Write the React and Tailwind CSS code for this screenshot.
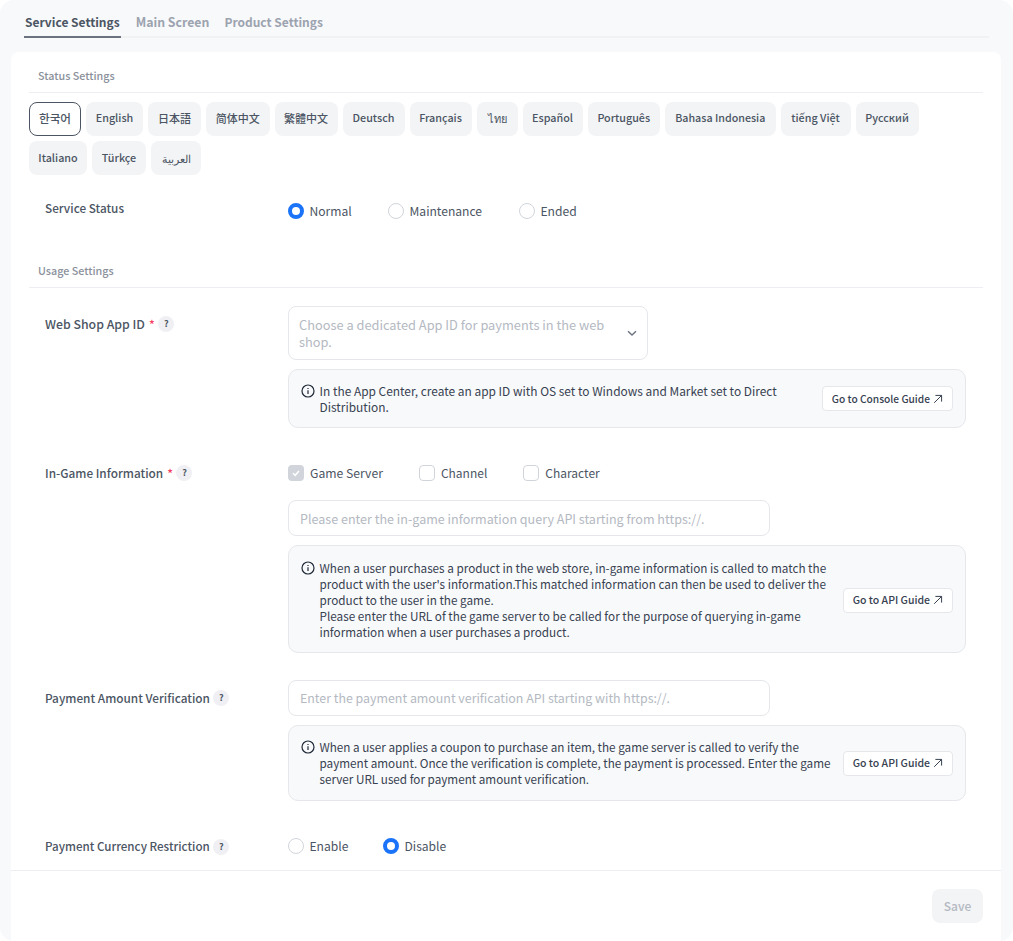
import React from "react";

const langs1 = [
  ["English", "text-[10.75px] w-[57px] pb-[1px]"], ["日本語", "text-[11px] w-[53px] pb-[1px]"], ["简体中文", "text-[11px] w-[63.5px] pb-[1px]"], ["繁體中文", "text-[11px] w-[63px] pb-[1px]"],
  ["Deutsch", "text-[10.75px] w-[62px] pb-[1px]"], ["Français", "text-[10.75px] w-[62px] pb-[1px]"], ["ไทย", "text-[11px] w-[41px] pb-[1px]"], ["Español", "text-[10.75px] w-[60px] pb-[1px]"],
  ["Português", "text-[10.75px] w-[72.5px] pb-[1px]"], ["Bahasa Indonesia", "text-[10.7px] w-[110.5px] pb-[1px]"], ["tiếng Việt", "text-[10.75px] w-[70px] pb-[1px]"], ["Русский", "text-[10.75px] w-[63px] pb-[1px]"],
];
const langs2 = [["Italiano", "text-[10.75px] w-[58px]"], ["Türkçe", "text-[10.75px] w-[54px]"], ["العربية", "text-[11px] w-[50px]"]];

function Lang({ children, active, size }) {
  return (
    <button className={"h-[34px] rounded-lg font-medium whitespace-nowrap text-[#4b5563] " + size + " " + (active ? "bg-white border border-[#4b5563]" : "bg-[#f3f4f6]")}>
      {children}
    </button>
  );
}

function Help() {
  return <span className="inline-flex items-center justify-center w-4 h-4 rounded-full bg-[#f0f0f4] text-[9px] font-bold text-[#4b5563] ml-[3.5px] shrink-0">?</span>;
}

function Label({ children, req, help, className = "" }) {
  return (
    <div className={"w-[243px] shrink-0 flex items-center h-5 font-medium text-[#4b5563] whitespace-nowrap " + className}>
      <span>{children}</span>
      {req && <span className="text-[#f43f5e] text-[12px] ml-[4px]">*</span>}
      {help && <Help />}
    </div>
  );
}

function Radio({ on, children, className = "" }) {
  return (
    <label className={"flex items-center gap-[5.5px] text-[12.1px] text-[#4b5563] " + className}>
      <span className={"w-4 h-4 rounded-full bg-white " + (on ? "border-[4px] border-[#1a73f8]" : "border border-[#d1d5db]")} />
      {children}
    </label>
  );
}

function Check({ on, children, size }) {
  return (
    <label className={"flex items-center gap-[6px] text-[#4b5563] " + size}>
      <span className={"w-4 h-4 rounded-[4px] flex items-center justify-center " + (on ? "bg-[#d1d5db]" : "bg-white border border-[#d1d5db]")}>
        {on && (
          <svg width="10" height="10" viewBox="0 0 10 10" fill="none" stroke="#fff" strokeWidth="1.5"><path d="M2 5.2 4.2 7.3 8 2.9" /></svg>
        )}
      </span>
      {children}
    </label>
  );
}

function Info({ children, btn, btnSize, textW, className = "" }) {
  return (
    <div className={"w-[678px] rounded-[10px] border border-[#e5e7eb] bg-[#f8f9fa] flex items-center pl-3 pr-3 " + className}>
      <div className="flex items-start">
        <svg className="shrink-0 mt-[1px]" width="14" height="14" viewBox="0 0 14 14" fill="none" stroke="#1f2937" strokeWidth="1.2">
          <circle cx="7" cy="7" r="6" />
          <path d="M7 6.2v3.8M7 3.9v1.2" />
        </svg>
        <div className={"ml-[4.5px] leading-4 text-[#374151] " + textW}>{children}</div>
      </div>
      <button className={"ml-auto h-[25px] px-[9px] rounded-[4px] bg-white border border-[#e5e7eb] font-medium text-[#374151] flex items-center gap-[3px] whitespace-nowrap " + btnSize}>
        {btn}
        <svg width="10" height="10" viewBox="0 0 10 10" fill="none" stroke="#374151" strokeWidth="1"><path d="M1.2 8.8 8.6 1.4M2.4 1.4h6.2v6.2" /></svg>
      </button>
    </div>
  );
}

function TextInput({ placeholder, size }) {
  return (
    <input
      placeholder={placeholder}
      className={"block w-[482px] h-9 rounded-lg border border-[#e5e7eb] bg-white px-[11px] placeholder:text-[#b4b9c2] outline-none " + size}
    />
  );
}

export default function App() {
  return (
    <div className="w-[1013px] h-[941px] overflow-hidden bg-white text-[#4b5563]" style={{ fontFamily: '"Noto Sans CJK KR","Noto Sans",sans-serif' }}>
      <div className="h-full rounded-[14px] bg-[#f8f9fb] flex flex-col">
        <div className="mx-[24px] h-[38px] border-b-2 border-[#f1f2f4] flex gap-[15px] shrink-0">
          <div className="h-[38px] px-[1px] pt-[12px] border-b-2 border-[#6b7280] text-[12px] leading-[20px] font-bold text-[#4b5563]">Service Settings</div>
          <div className="pt-[12px] text-[12.3px] leading-[20px] font-bold text-[#9ca3af]">Main Screen</div>
          <div className="pt-[12px] text-[12px] leading-[20px] font-bold text-[#9ca3af]">Product Settings</div>
        </div>

        <div className="ml-[11px] mr-[12px] mt-[14px] flex-1 min-h-0 bg-white rounded-t-[8px] flex flex-col">
          <div className="flex-1 min-h-0 overflow-hidden px-[18px]">
            <div className="h-[41px] border-b border-[#eceef1] pl-[9px] pt-[16px] text-[10.75px] leading-4 font-medium text-[#8b919b]">Status Settings</div>
            <div className="mt-[9px] flex flex-col gap-[5px]">
              <div className="flex gap-[5px]">
                <Lang active size="text-[11.6px] w-[52px] pb-[1px]">한국어</Lang>
                {langs1.map(([l, s]) => <Lang key={l} size={s}>{l}</Lang>)}
              </div>
              <div className="flex gap-[5px]">
                {langs2.map(([l, s]) => <Lang key={l} size={s}>{l}</Lang>)}
              </div>
            </div>

            <div className="mt-[24px] pl-4 flex">
              <Label className="-mt-[1px] text-[11.75px]">Service Status</Label>
              <div className="flex pt-[4px] h-5">
                <Radio on className="w-[100px]">Normal</Radio>
                <Radio className="w-[131px]">Maintenance</Radio>
                <Radio>Ended</Radio>
              </div>
            </div>

            <div className="mt-[28px] h-[41px] border-b border-[#eceef1] pl-[9px] pt-[16px] text-[10.75px] leading-4 font-medium text-[#8b919b]">Usage Settings</div>

            <div className="mt-[18px] pl-4 flex">
              <Label className="mt-[8px] text-[12.3px]" req help>Web Shop App ID</Label>
              <div>
                <div className="w-[360px] h-[54px] rounded-lg border border-[#e5e7eb] bg-white pl-[10px] pr-[9px] flex items-center">
                  <span className="w-[316px] text-[12.8px] leading-[17px] text-[#b4b9c2]">Choose a dedicated App ID for payments in the web shop.</span>
                  <svg className="ml-auto" width="12" height="12" viewBox="0 0 12 12" fill="none" stroke="#6b7280" strokeWidth="1.4"><path d="M2 4.2 6 8l4-3.8" /></svg>
                </div>
                <Info className="mt-[9px] h-[59px]" btn="Go to Console Guide" btnSize="text-[10.2px]" textW="w-[490px] text-[11.92px]">
                  In the App Center, create an app ID with OS set to Windows and Market set to Direct Distribution.
                </Info>
              </div>
            </div>

            <div className="mt-[36px] pl-4 flex">
              <Label req help className="mt-[-1px] text-[11.8px]">In-Game Information</Label>
              <div>
                <div className="flex gap-[36px] h-5 -mt-[1px]">
                  <Check on size="text-[12.2px]">Game Server</Check>
                  <Check size="text-[12px]">Channel</Check>
                  <Check size="text-[12px]">Character</Check>
                </div>
                <div className="mt-[17px]"><TextInput size="text-[12.55px]" placeholder="Please enter the in-game information query API starting from https://." /></div>
                <Info className="mt-[9px] h-[108px] pt-[2px]" btn="Go to API Guide" btnSize="text-[10.5px]" textW="w-[512px] text-[11.72px]">
                  When a user purchases a product in the web store, in-game information is called to match the product with the user's information.This matched information can then be used to deliver the product to the user in the game.
                  <br />
                  Please enter the URL of the game server to be called for the purpose of querying in-game information when a user purchases a product.
                </Info>
              </div>
            </div>

            <div className="mt-[27px] pl-4 flex">
              <Label help className="mt-[8px] text-[11.8px]">Payment Amount Verification</Label>
              <div>
                <TextInput size="text-[12.4px]" placeholder="Enter the payment amount verification API starting with https://." />
                <Info className="mt-[9px] h-[76px]" btn="Go to API Guide" btnSize="text-[10.5px]" textW="w-[516px] text-[11.7px]">
                  When a user applies a coupon to purchase an item, the game server is called to verify the payment amount. Once the verification is complete, the payment is processed. Enter the game server URL used for payment amount verification.
                </Info>
              </div>
            </div>

            <div className="mt-[35px] pl-4 flex">
              <Label help className="mt-[1px] text-[11.6px]">Payment Currency Restriction</Label>
              <div className="flex h-5">
                <Radio className="w-[95px]">Enable</Radio>
                <Radio on>Disable</Radio>
              </div>
            </div>
          </div>

          <div className="h-[71px] shrink-0 border-t border-[#eceef1] flex justify-end pr-[18px] pt-[18px]">
            <button className="w-[51px] h-[34px] rounded-lg bg-[#f3f4f6] text-[12px] font-medium text-[#b4b9c2]">Save</button>
          </div>
        </div>
      </div>
    </div>
  );
}
